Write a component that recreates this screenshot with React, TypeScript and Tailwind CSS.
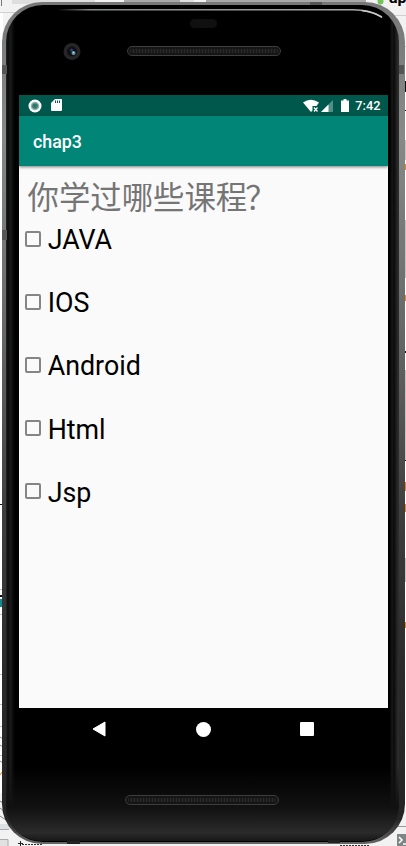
const courses = ['JAVA', 'IOS', 'Android', 'Html', 'Jsp'];

// Slices of the editor window that stay visible around the phone
function Desktop() {
  return (
    <svg className="absolute inset-0" width="406" height="846" viewBox="0 0 406 846" fill="none">
      <path fill="#f2f2f2" d="M0 0h406v846H0z" />
      <path fill="#dedede" d="M12 0h83v4H12zM180 0h14v2h-14z" />
      <path fill="#a8a8a8" d="M124 0h56v3h-56zM206 0h160v3H206z" />
      <path stroke="#d0d0d0" d="M0 12.500h20M385 15.500h21M400 46.500h6" />
      <path stroke="#777" d="M1.500 0v6" />
      <path fill="#fff" d="M0 13h3v780H0zM403 60h3v750h-3z" />
      <path fill="#c4c4c4" d="M404 140h2v20h-2zM404 220h2v58h-2zM404 370h2v90h-2zM404 558h2v24h-2z" />
      <path fill="#111" d="M404 81h2v11h-2zM404 110h2v1h-2zM404 351h2v2h-2zM404 460h2v1h-2zM0 504h2v1H0zM0 595h2v2H0z" />
      <path fill="#df8a28" d="M404 164h2v6h-2zM404 295h2v6h-2zM404 482h2v9h-2zM404 504h2v8h-2zM404 622h2v6h-2z" />
      <path fill="#168a91" d="M0 599h2v8H0z" />
      <path stroke="#b9c3c4" d="M0 589.500h2M0 614.500h2M0 674.500h2M0 704.500h3M0 726.500h3M0 755.500h3M0 801.500h3" />
      <path stroke="#888" d="m0 737 3 2m-3 6 3 2m-3 14 3 2m-3 38 4 3m-4 4 5 4m-5 4 6 4" />
      <path stroke="#df8a28" d="m0 775 2-3" />
      <path fill="#dce2e4" d="M0 824h14v5H0z" />
      <path stroke="#aaa" d="M0 829.500h9" />
      <path fill="#e1e1e1" stroke="#aaa" d="M-1 839.500h9v8h-9z" />
      <path stroke="#333" strokeDasharray="2 1" d="M22 844.500h20M340 845.500h30" />
      <path stroke="#222" d="M20.500 841v5M18 843.500h5" />
      <path stroke="#999" d="M398 826.500h8" />
      <path fill="#7f8485" d="M397 834h9v12h-9z" />
      <path stroke="#fff" strokeWidth="1.500" d="m399 837 3 3-3 3m4 1h3" />
      <circle cx="380.500" cy="1.500" r="3" fill="#73c655" />
    </svg>
  );
}

// Toolbar label, cut off by the window edge
function ToolbarLabel() {
  return (
    <span className="absolute -top-[11px] left-[389px] text-[16px] font-bold leading-[18px] text-black">ap</span>
  );
}

function Highlights() {
  return (
    <svg className="absolute inset-0 z-10 pointer-events-none" width="406" height="846" viewBox="0 0 406 846" fill="none">
      <defs>
        <linearGradient id="rim" x1="57" x2="384" y1="0" y2="0" gradientUnits="userSpaceOnUse">
          <stop stopColor="#808785" stopOpacity="0" />
          <stop offset=".1" stopColor="#808785" />
          <stop offset="1" stopColor="#a8abaa" />
        </linearGradient>
      </defs>
      <path stroke="url(#rim)" strokeWidth="1.500" d="M57 9.500 62 9.800H353c12 0 20 2 29 7" />
      <path stroke="#ccc" strokeWidth="1.500" d="M362 10.500c9 1 14 3 20 7" />
      <path fill="#555" d="M310 2h12v3h-12zM2 65h5v9H2zM399 65h5v9h-5zM2 230h5v10H2z" />
      <path fill="#222" d="M67 841h13v3H67zM328 840h12v3h-12z" />
      <rect x="190" y="19" width="27" height="9" rx="4.500" fill="#101010" />
      <circle cx="72" cy="51.500" r="8.500" fill="#262626" />
      <circle cx="72" cy="51.500" r="5" fill="#101015" />
      <circle cx="71.500" cy="50" r="1.500" fill="#2a3c76" />
      <circle cx="73.500" cy="53" r="2" fill="#5b9fae" />
      <path fill="#c9dce4" d="M73 52h1v1h-1z" />
    </svg>
  );
}

function Speaker() {
  return (
    <div className="h-[10px] w-[154px] rounded-full border border-[#3e3e3e] bg-[#151515] p-[2px]">
      <div className="h-full rounded-full bg-[repeating-linear-gradient(90deg,#2a2a2a_0px,#2a2a2a_1px,#1b1b1b_1px,#1b1b1b_3px)]" />
    </div>
  );
}

function StatusBar() {
  return (
    <div className="flex h-[21px] items-center bg-[#00574b] pl-[9px] pr-[7px] text-white">
      <svg width="14" height="14" viewBox="0 0 14 14">
        <circle cx="7" cy="7" r="6.500" fill="#fff" />
        <circle cx="7" cy="7" r="4.300" fill="#8db5b1" />
        <circle cx="7" cy="7" r="2.800" fill="#38776f" />
      </svg>
      <svg className="ml-[9px]" width="11" height="13" viewBox="0 0 11 13">
        <path fill="#fff" d="M4 0h6q1 0 1 1v10q0 1-1 1H1q-1 0-1-1V4z" />
        <path fill="#00574b" d="M4 1.500h1v2.500H4zM6 1.500h1v2.500H6zM8 1.500h1v2.500H8z" />
      </svg>
      <div className="flex-1" />
      <svg width="49" height="14" viewBox="0 0 49 14">
        <path fill="#fff" d="M0 3.500Q7.500-2 16 3.500L13.500 7H9.500v4.500L8 13z" />
        <path stroke="#fff" strokeWidth="1.200" d="m11 8.500 3.500 4m0-4-3.500 4" />
        <path fill="#528f87" d="M30 1v12H18z" />
        <path fill="#fff" d="M25.500 5.500V13H18z" />
        <path fill="#fff" d="M40.500 0h3v1.500H46V13h-8V1.500h2.500z" />
      </svg>
      <span className="ml-[3px] pt-px text-[12.800px] font-medium leading-none">7:42</span>
    </div>
  );
}

function NavBar() {
  return (
    <div className="flex h-[42px] items-center justify-between pl-[73px] pr-[74px]">
      <svg width="14" height="16" viewBox="0 0 14 16">
        <path fill="#fff" stroke="#fff" strokeLinejoin="round" d="M1 8 13 1v14z" />
      </svg>
      <div className="ml-px size-[15px] rounded-full bg-white" />
      <div className="size-[14px] rounded-[1px] bg-white" />
    </div>
  );
}

export default function App() {
  return (
    <div className="relative h-[846px] w-[406px] overflow-hidden font-['Roboto','Noto_Sans_CJK_SC',sans-serif]">
      <Desktop />
      <ToolbarLabel />
      <div className="relative h-full pl-[2px] pr-[1px] pt-[2px] pb-[2px]">
        {/* Metal shell */}
        <div className="h-full rounded-[40px] bg-[linear-gradient(180deg,#777_0%,#858a88_16%,#686a69_38%,#404040_60%,#2a2a2a_80%,#242424_97%,#666_100%)] pt-[3px] pr-[6px] pb-[2px] pl-[4px]">
          <div className="h-full rounded-[37px] bg-[linear-gradient(90deg,#262626_0px,#0a0a0a_2px,#1c1c1c_4px,#101010_6px,#000_9px,#000_384px,#181818_386px,#0a0a0a_388px,#1c1c1c_390px,#2c2c2c_392px)] pt-[3px] pb-px">
            <div className="flex h-full flex-col items-center rounded-[35px] bg-[linear-gradient(180deg,transparent_0%,transparent_91%,#111_96%,#2b2b2b_99%,#171717_100%)] pl-px">
              <div className="flex h-[87px] shrink-0 items-center pl-px pb-[2px]">
                <Speaker />
              </div>

              {/* Screen */}
              <div className="flex h-[613px] w-[369px] shrink-0 flex-col bg-[#fafafa]">
                <StatusBar />
                <div className="z-10 flex h-[50px] shrink-0 items-center bg-[#008577] pl-[14.500px] pt-[2px] text-[17.800px] font-medium text-white shadow-[0_1px_3px_rgba(0,0,0,0.5)]">
                  chap3
                </div>
                <div className="flex-1 pt-[12px]">
                  <h1 className="h-[40px] pl-[9px] text-[31.400px] font-normal leading-[42px] text-[#757575] whitespace-nowrap">
                    你学过哪些课程<span className="-ml-[2px]">？</span>
                  </h1>
                  {courses.map((course) => (
                    <label key={course} className="flex h-[63.200px] items-start pl-[6px] text-[26.800px] leading-[44px] text-black">
                      <span className="mt-[12.600px] size-[16px] shrink-0 rounded-[2px] border-2 border-[#858585]" />
                      <span className="pl-[7.200px]">{course}</span>
                    </label>
                  ))}
                </div>
              </div>

              <div className="w-[369px] shrink-0">
                <NavBar />
              </div>
              <div className="mt-[45px] mr-[3px]">
                <Speaker />
              </div>
            </div>
          </div>
        </div>
      </div>
      <Highlights />
    </div>
  );
}
